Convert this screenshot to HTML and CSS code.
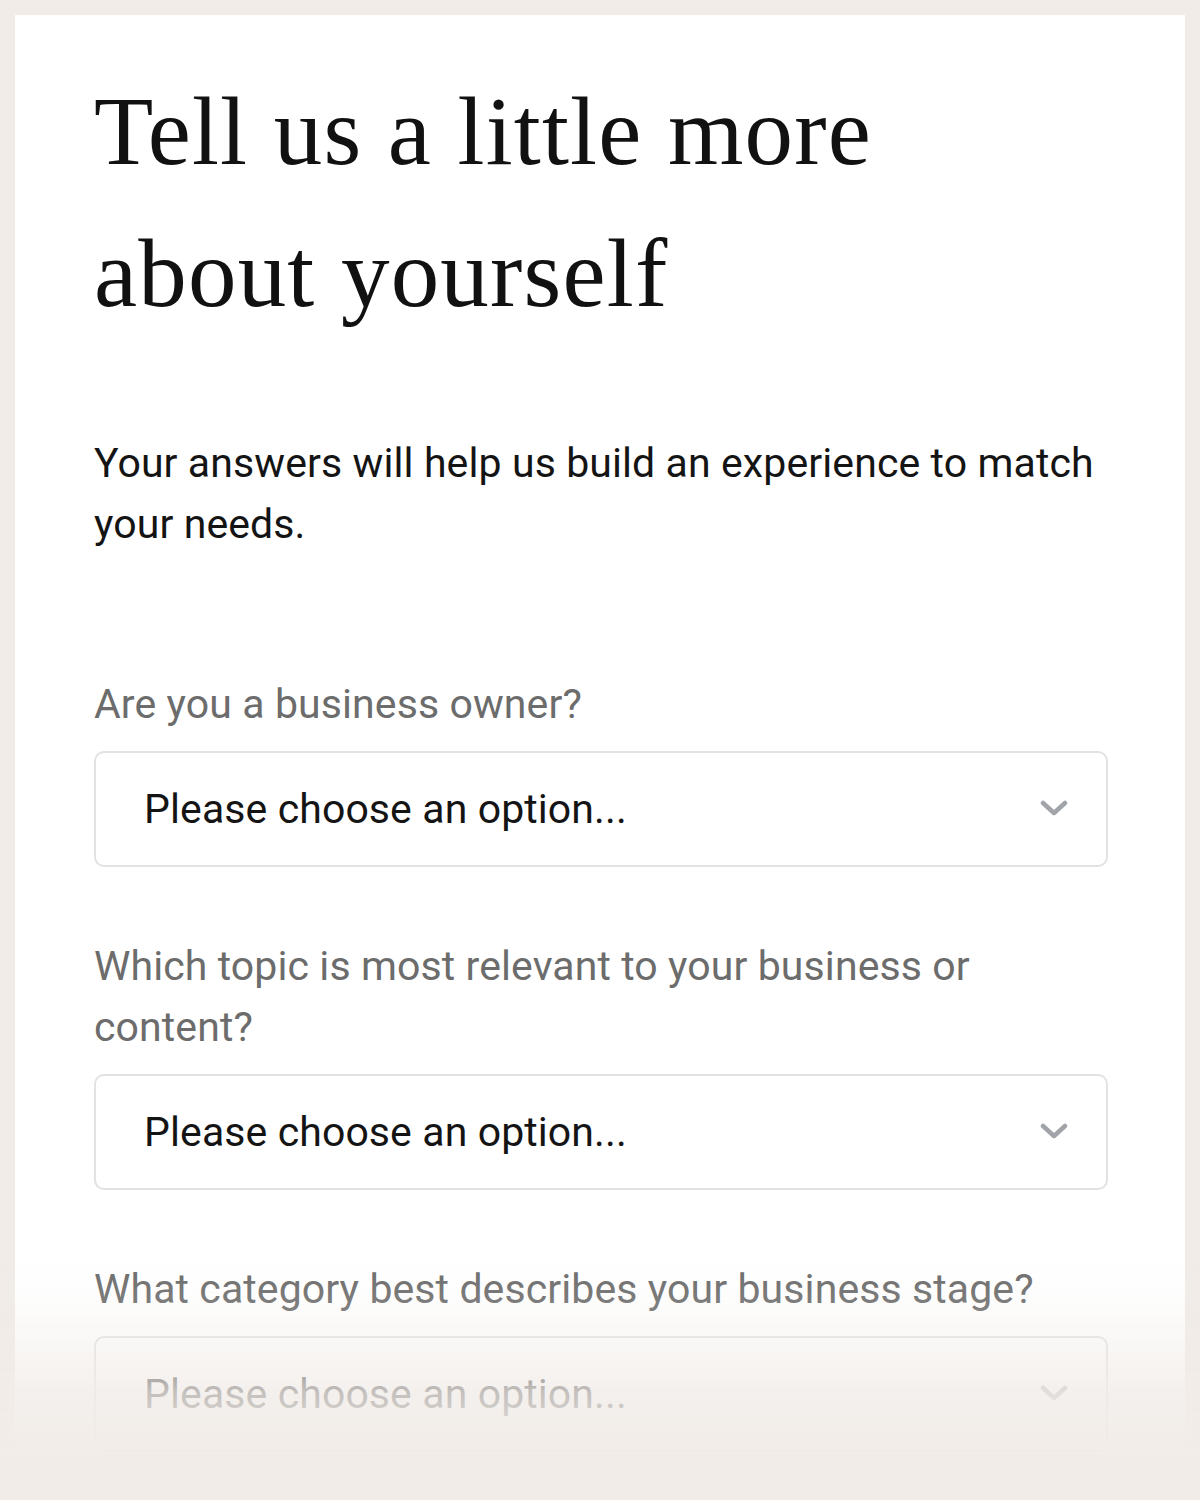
FILE: index.html
```html
<!DOCTYPE html>
<html>
<head>
<meta charset="utf-8">
<title>Tell us a little more about yourself</title>
<link rel="stylesheet" href="styles.css">
</head>
<body>
<div class="card">
	<h1 class="title">Tell us a little more about yourself</h1>
	<p class="intro">Your answers will help us build an experience to match your needs.</p>

	<div class="field">
		<label class="field-label" for="q1">Are you a business owner?</label>
		<div class="select-wrap">
			<select id="q1"><option>Please choose an option...</option></select>
			<svg class="chevron" viewBox="0 0 28 16"><path d="M3 3l11 10L25 3"/></svg>
		</div>
	</div>

	<div class="field">
		<label class="field-label" for="q2">Which topic is most relevant to your business or content?</label>
		<div class="select-wrap">
			<select id="q2"><option>Please choose an option...</option></select>
			<svg class="chevron" viewBox="0 0 28 16"><path d="M3 3l11 10L25 3"/></svg>
		</div>
	</div>

	<div class="field">
		<label class="field-label" for="q3">What category best describes your business stage?</label>
		<div class="select-wrap">
			<select id="q3"><option>Please choose an option...</option></select>
			<svg class="chevron" viewBox="0 0 28 16"><path d="M3 3l11 10L25 3"/></svg>
		</div>
	</div>
</div>
<div class="fade"></div>
</body>
</html>
```

FILE: styles.css
```css
* {margin:0; padding:0; box-sizing:border-box;}
html, body {height:100%;}
body {background:#f1ece8; padding:15px 15px 0; overflow:hidden; font-family:Roboto, "Noto Sans", sans-serif;}

.card {background:#fff; min-height:100%; padding:46px 77px 80px 79px;}

.title {font-family:"Liberation Serif", "DejaVu Serif", serif; font-weight:400; font-size:97px; line-height:142px; color:#111; letter-spacing:1.2px;}

.intro {margin-top:88px; font-size:41px; line-height:61px; color:#141414; letter-spacing:0.1px;}

.field {margin-top:119px;}
.field + .field {margin-top:69px;}
.field-label {display:block; font-size:41px; line-height:61px; color:#6c6c6c; letter-spacing:0.1px;}

.select-wrap {position:relative; margin-top:16px;}
.select-wrap select {display:block; width:100%; height:116px; padding:0 90px 0 48px; border:2px solid #e2e2e2; border-radius:10px; background:#fff; font-family:Roboto, sans-serif; font-size:41px; letter-spacing:0.1px; color:#141414; appearance:none; -webkit-appearance:none; outline:none;}
.chevron {position:absolute; right:40px; top:50%; width:28px; height:16px; margin-top:-9px; fill:none; stroke:#a0a4a8; stroke-width:4.5; stroke-linecap:round; stroke-linejoin:round; pointer-events:none;}

.fade {position:fixed; left:0; right:0; bottom:0; height:240px; background:linear-gradient(to bottom, rgba(241,236,232,0) 0%, rgba(241,236,232,0.15) 20%, rgba(241,236,232,0.8) 55%, rgba(241,236,232,0.97) 80%, rgba(241,236,232,1) 100%); pointer-events:none;}
```
